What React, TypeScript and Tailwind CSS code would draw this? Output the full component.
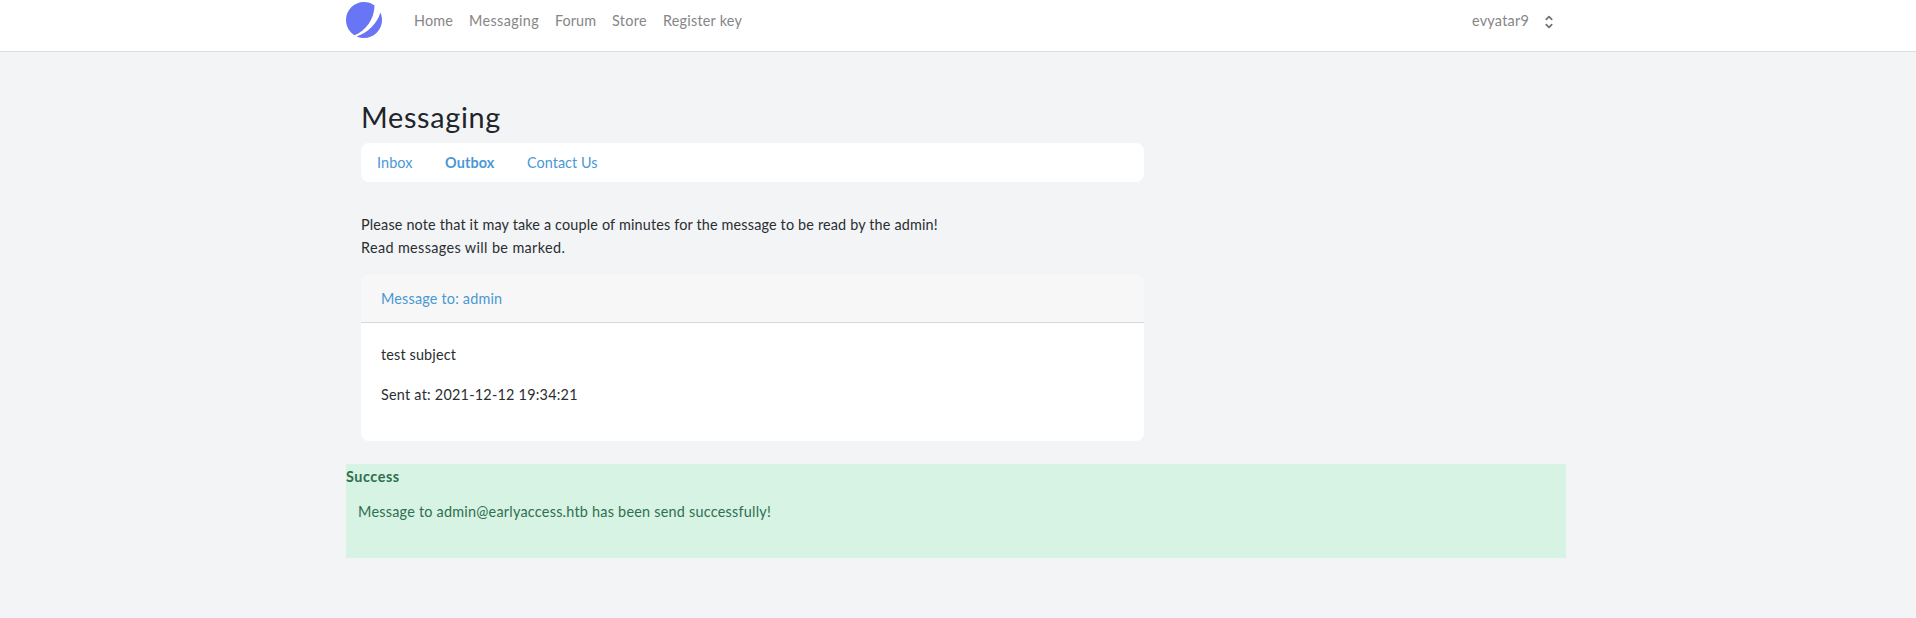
const links = [
  { label: 'Home', className: 'w-[55px] tracking-[0.16px]' },
  { label: 'Messaging', className: 'w-[86px] tracking-[0.36px]' },
  { label: 'Forum', className: 'w-[57px] tracking-[0.05px]' },
  { label: 'Store', className: 'w-[51px] tracking-[0.34px]' },
  { label: 'Register key', className: 'w-[95px] tracking-[0.22px]' },
];

function Logo() {
  return (
    <svg viewBox="0 0 48 48" className="size-9 shrink-0" fill="#6875f5">
      <path d="M11.395 44.428C4.557 40.198 0 32.632 0 24 0 10.745 10.745 0 24 0a23.891 23.891 0 0113.997 4.502c-.2 17.907-11.097 33.245-26.602 39.926z" />
      <path d="M14.134 45.885A23.914 23.914 0 0024 48c13.255 0 24-10.745 24-24 0-3.516-.756-6.856-2.115-9.866-4.659 15.143-16.608 27.092-31.75 31.751z" />
    </svg>
  );
}

function Selector() {
  return (
    <svg viewBox="0 0 20 20" className="size-[18px] text-[#707070]" fill="currentColor">
      <path
        fillRule="evenodd"
        clipRule="evenodd"
        d="M10 3a1 1 0 01.707.293l3 3a1 1 0 01-1.414 1.414L10 5.414 7.707 7.707a1 1 0 01-1.414-1.414l3-3A1 1 0 0110 3zm-3.707 9.293a1 1 0 011.414 0L10 14.586l2.293-2.293a1 1 0 011.414 1.414l-3 3a1 1 0 01-1.414 0l-3-3a1 1 0 010-1.414z"
      />
    </svg>
  );
}

function NavBar() {
  return (
    <nav className="h-[52px] border-b border-[#dadde1] bg-white pt-0.5 text-[#868686]">
      <div className="mx-auto flex w-[1224px] items-center pr-3">
        <Logo />
        <div className="ml-8 flex leading-[23px]">
          {links.map((link) => (
            <a key={link.label} className={link.className}>
              {link.label}
            </a>
          ))}
        </div>
        <button className="ml-auto flex items-center gap-[11px] leading-[23px]">
          <span className="tracking-[0.24px]">evyatar9</span>
          <span className="pt-1">
            <Selector />
          </span>
        </button>
      </div>
    </nav>
  );
}

export default function App() {
  return (
    <div className="min-h-[618px] whitespace-nowrap bg-[#f2f4f6] font-['Lato',sans-serif] text-[14.4px] leading-[23px] text-[#2a2e32]">
      <NavBar />
      <main className="mx-auto w-[1224px] pt-12">
        <section className="ml-[15px] w-[783px]">
          <h2 className="h-[43px] text-[28.8px] leading-[35px] tracking-[0.7px] text-[#212529]">Messaging</h2>
          <div className="flex h-[39px] items-center gap-8 rounded-lg bg-white px-4 text-[#4a98d5]">
            <a className="w-9 tracking-[0.1px]">Inbox</a>
            <a className="w-[50px] font-bold tracking-[0.15px]">Outbox</a>
            <a className="tracking-[0.05px]">Contact Us</a>
          </div>
          <p className="mt-[31px] tracking-[0.165px]">
            Please note that it may take a couple of minutes for the message to be read by the admin!
          </p>
          <p className="tracking-[0.37px]">Read messages will be marked.</p>
          <article className="mt-4 h-[166px] overflow-hidden rounded-lg bg-white">
            <header className="h-12 border-b border-[#d5d8da] bg-[#f7f7f7] px-5 py-3 text-[#4a98d5] tracking-[0.19px]">
              Message to: admin
            </header>
            <div className="px-5 pt-5">
              <p className="tracking-[0.15px]">test subject</p>
              <p className="mt-[17px] tracking-[0.24px]">Sent at: 2021-12-12 19:34:21</p>
            </div>
          </article>
        </section>
        <section className="mt-[23px] h-[94px] w-[1220px] bg-[#d7f3e3] pt-px text-[#2f6f50]">
          <h3 className="font-bold tracking-[0.55px]">Success</h3>
          <p className="mt-3 pl-3 tracking-[0.24px]">
            Message to admin@earlyaccess.htb has been send successfully!
          </p>
        </section>
      </main>
    </div>
  );
}
